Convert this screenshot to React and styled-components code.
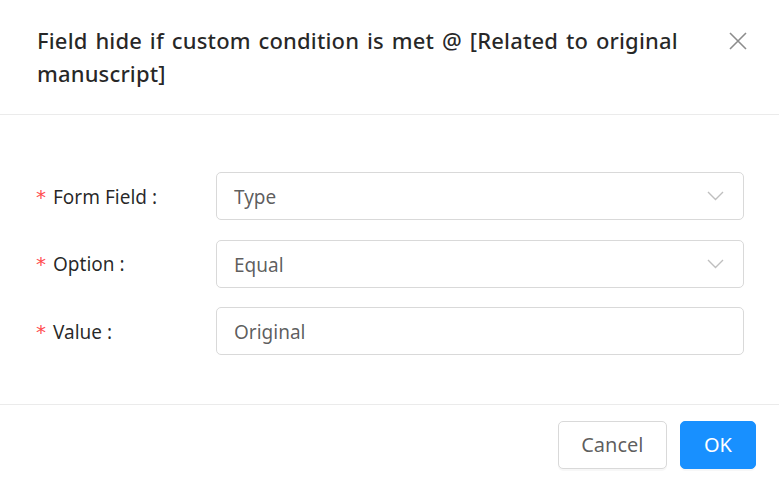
import React from "react";
import styled, { createGlobalStyle } from "styled-components";

const GlobalStyle = createGlobalStyle`
    html, body {
        margin: 0;
        padding: 0;
        background: #ffffff;
    }
    body {
        font-family: "Noto Sans", "Open Sans", sans-serif;
    }
`;

const fields = [
    { label: "Form Field", value: "Type", select: true },
    { label: "Option", value: "Equal", select: true },
    { label: "Value", value: "Original", select: false },
];

function ChevronDown() {
    return (
        <svg width="17" height="10" viewBox="0 0 17 10" fill="none">
            <path d="M1 1 L8.5 8.5 L16 1" stroke="#bfbfbf" strokeWidth="1.4" />
        </svg>
    );
}

function CloseIcon() {
    return (
        <svg width="18" height="18" viewBox="0 0 18 18" fill="none">
            <path d="M1 1 L17 17 M17 1 L1 17" stroke="#8c8c8c" strokeWidth="1.6" />
        </svg>
    );
}

function App() {
    return (
        <>
            <GlobalStyle />
            <Modal>
                <Header>
                    <Title>Field hide if custom condition is met @ [Related to original manuscript]</Title>
                    <CloseButton aria-label="Close">
                        <CloseIcon />
                    </CloseButton>
                </Header>
                <Body>
                    {fields.map((field) => (
                        <Row key={field.label}>
                            <Label>
                                <Required>*</Required>
                                {field.label}
                                <Colon>:</Colon>
                            </Label>
                            <Control>
                                <ControlText>{field.value}</ControlText>
                                {field.select && <ChevronDown />}
                            </Control>
                        </Row>
                    ))}
                </Body>
                <Footer>
                    <Button>Cancel</Button>
                    <Button primary>OK</Button>
                </Footer>
            </Modal>
        </>
    );
}

const Modal = styled.div`
    width: 779px;
    height: 484px;
    background: #fff;
    display: flex;
    flex-direction: column;
    box-sizing: border-box;
`;

const Header = styled.div`
    display: flex;
    align-items: flex-start;
    justify-content: space-between;
    padding: 24px 32px 24px 37px;
    border-bottom: 1px solid #ebebeb;
    height: 115px;
    box-sizing: border-box;
`;

const Title = styled.div`
    font-size: 22px;
    line-height: 33px;
    font-weight: 500;
    letter-spacing: 0.15px;
    word-spacing: 2px;
    color: rgba(0, 0, 0, 0.85);
    max-width: 660px;
`;

const CloseButton = styled.button`
    border: none;
    background: none;
    padding: 0;
    margin-top: 8px;
    display: flex;
    cursor: pointer;
`;

const Body = styled.div`
    flex: 1;
    display: flex;
    flex-direction: column;
    gap: 19.5px;
    padding: 57px 35px 0 36px;
    border-bottom: 1px solid #ebebeb;
`;

const Row = styled.div`
    display: flex;
    align-items: center;
`;

const Label = styled.label`
    width: 180px;
    display: flex;
    align-items: center;
    padding-top: 1px;
    font-size: 19px;
    color: rgba(0, 0, 0, 0.85);
`;

const Required = styled.span`
    color: #ff4d4f;
    font-size: 20px;
    margin-right: 7px;
    font-family: "DejaVu Sans", sans-serif;
`;

const Colon = styled.span`
    margin-left: 5px;
`;

const Control = styled.div`
    flex: 1;
    height: 48px;
    box-sizing: border-box;
    border: 1px solid #d9d9d9;
    border-radius: 5px;
    display: flex;
    align-items: center;
    justify-content: space-between;
    padding: 0 19px 0 17px;
    font-size: 19px;
    color: rgba(0, 0, 0, 0.65);
`;

const ControlText = styled.span`
    padding-top: 2px;
`;

const Footer = styled.div`
    height: 79px;
    box-sizing: border-box;
    display: flex;
    justify-content: flex-end;
    align-items: center;
    gap: 13px;
    padding: 0 23px 0 24px;
`;

const Button = styled.button`
    height: 48px;
    padding: 0 ${(p) => (p.primary ? "23px" : "22.5px")};
    border-radius: 5px;
    font-family: inherit;
    font-size: 20px;
    border: 1px solid ${(p) => (p.primary ? "#1890ff" : "#d9d9d9")};
    background: ${(p) => (p.primary ? "#1890ff" : "#fff")};
    color: ${(p) => (p.primary ? "#fff" : "rgba(0, 0, 0, 0.65)")};
    box-shadow: 0 2px 0 rgba(0, 0, 0, 0.03);
    cursor: pointer;
`;

export default App;
